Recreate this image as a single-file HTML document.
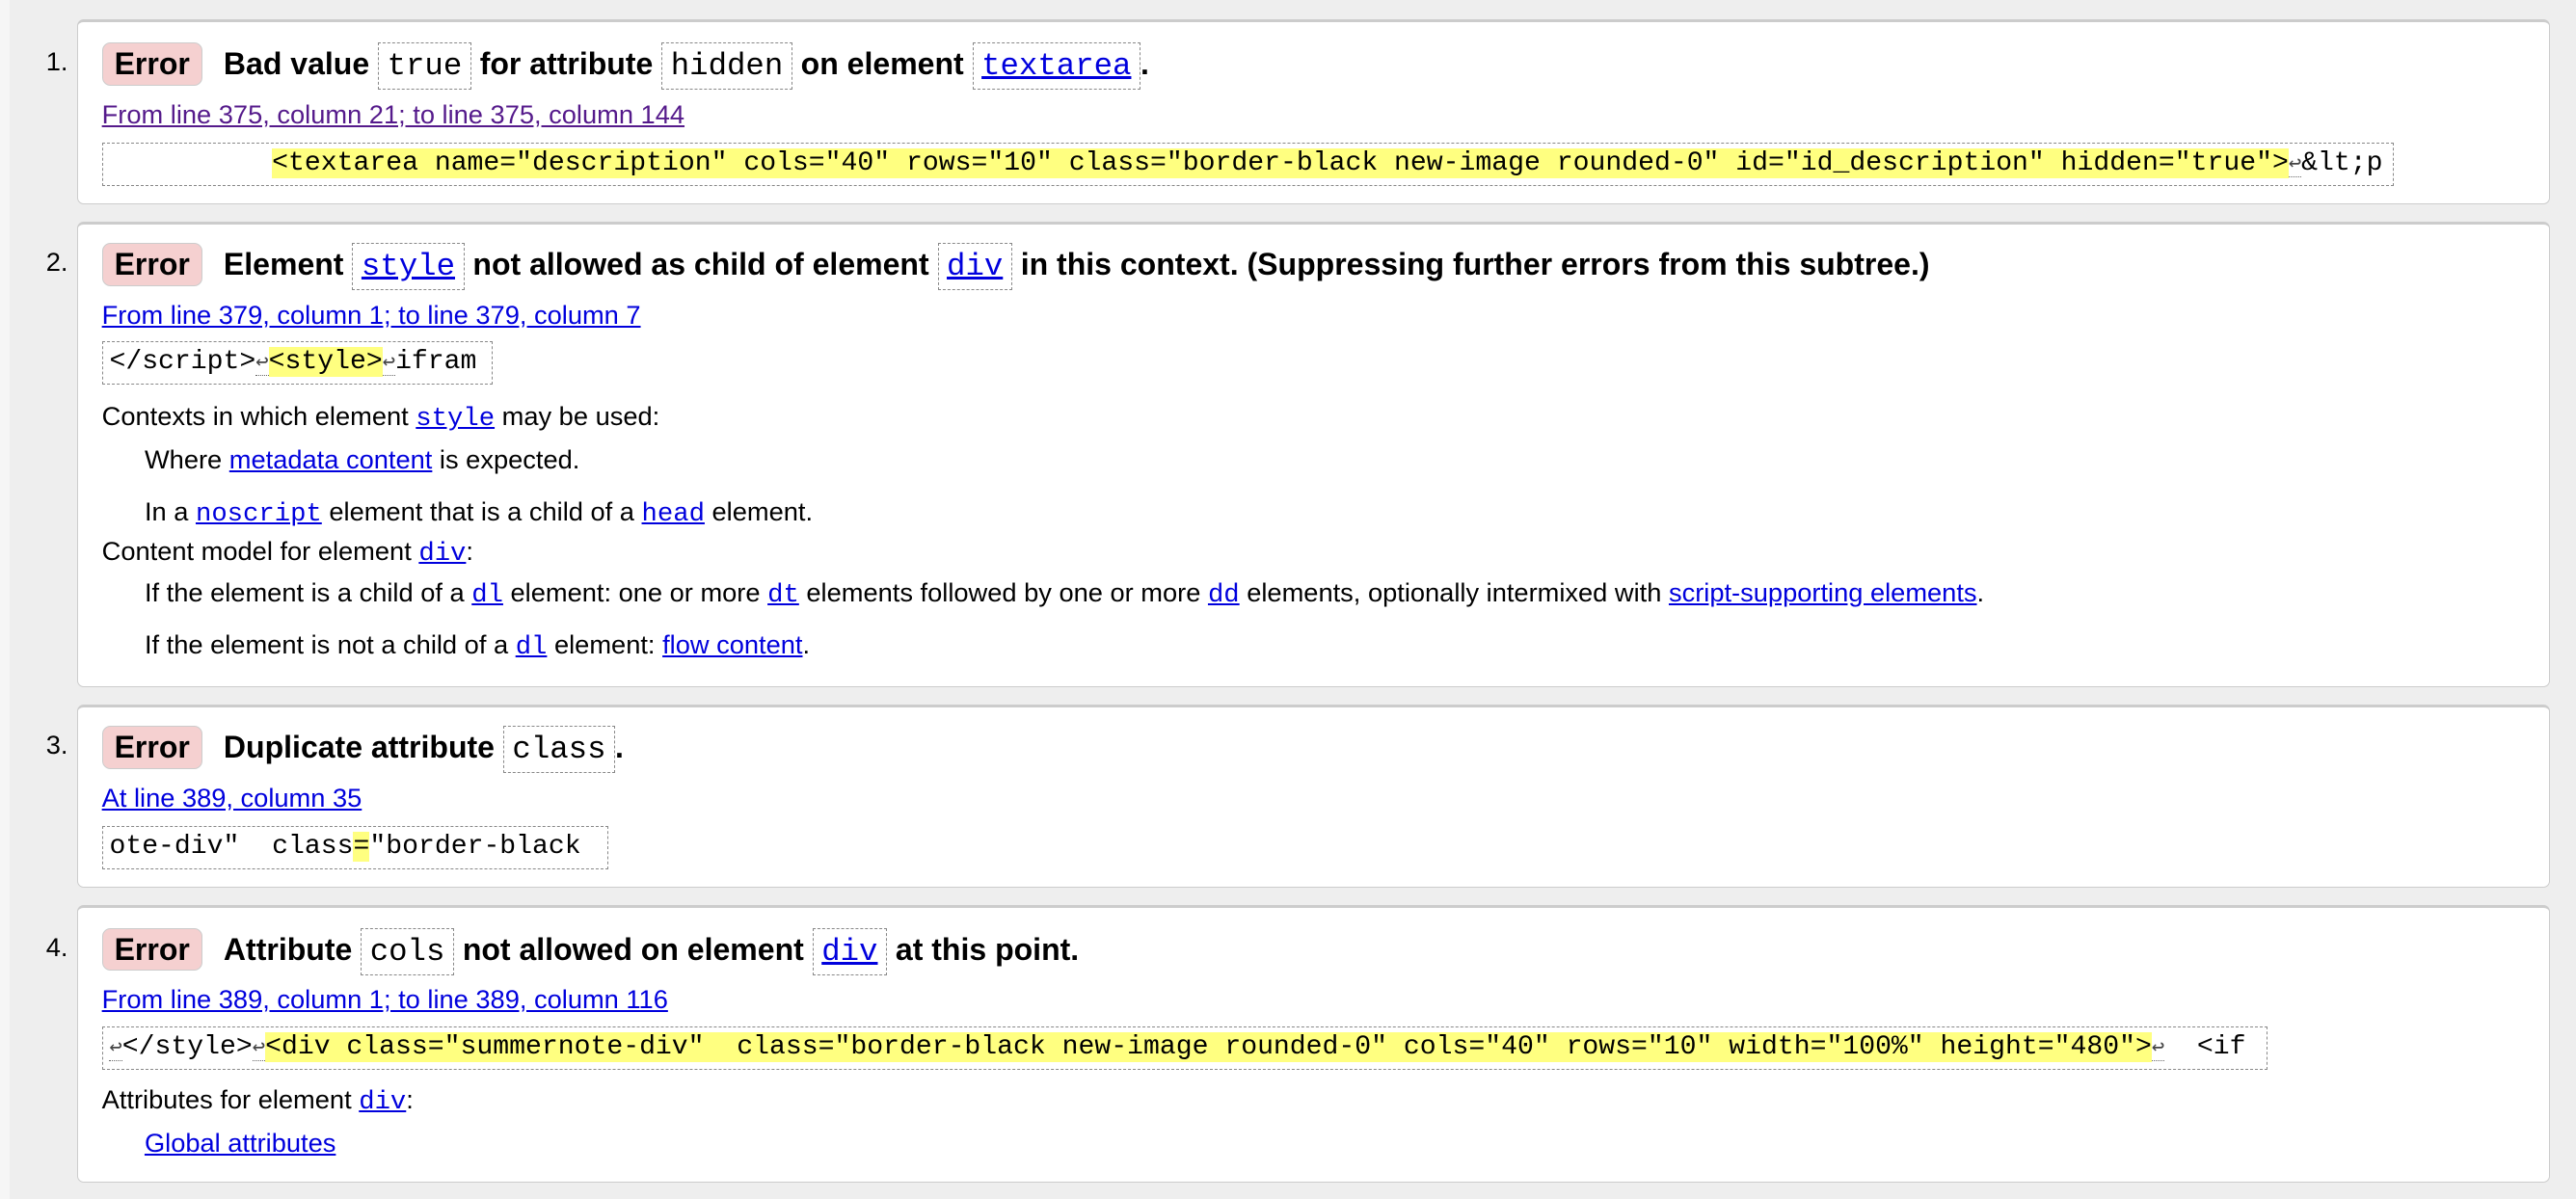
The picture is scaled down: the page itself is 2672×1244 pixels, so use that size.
<!DOCTYPE html>
<html><head><meta charset="utf-8"><style>
html,body{margin:0;padding:0;background:#eeeeee;width:2672px;height:1244px;overflow:hidden}
#w{zoom:1.704;position:relative;width:1568px;height:730px;font-family:"Liberation Sans",Arial,sans-serif;font-size:16px;color:#000}
#strip{position:absolute;left:0;top:0;width:6px;height:730px;background:#f6f6f6}
.card{position:absolute;left:47px;width:1504px;background:#fff;border:1px solid #ccc;border-top:2px solid #ccc;border-radius:4px}
.l{position:absolute;white-space:pre;line-height:24px;height:24px}
.num{position:absolute;left:28px;line-height:24px}
.t{font-weight:bold;font-size:18.8px}
.badge{display:inline-block;background:#f5d0d0;border:1px solid #ccc;border-radius:5px;padding:0 7px;line-height:25px;margin-right:13px}
.ic{font-family:"Liberation Mono",monospace;font-weight:normal;font-size:19px;border:1px dashed #888;padding:3px 5px}
a{color:#0000dd;text-decoration:underline}
a.v{color:#551a8b}
.m{font-family:"Liberation Mono",monospace}
.cb{position:absolute;left:62px;height:25px;border:1px dashed #888;font-family:"Liberation Mono",monospace;font-size:16.5px;line-height:25px;white-space:pre;padding:0 4px;overflow:hidden}
.hl{background:#ffff80}
.r{font-size:13px;color:#444;border-bottom:1px dotted #666}
</style></head><body><div id="w">
<div id="strip"></div>
<div class="card" style="top:12px;height:110px"></div>
<div class="card" style="top:135px;height:281px"></div>
<div class="card" style="top:429px;height:109px"></div>
<div class="card" style="top:551px;height:167px"></div>

<div class="num" style="top:26px">1.</div>
<div class="l t" style="left:62px;top:26px"><span class="badge">Error</span>Bad value <span class="ic">true</span> for attribute <span class="ic">hidden</span> on element <span class="ic"><a href="#">textarea</a></span>.</div>
<div class="l" style="left:62px;top:58px"><a class="v" href="#">From line 375, column 21; to line 375, column 144</a></div>
<div class="cb" style="top:87px;width:1386px">          <span class="hl">&lt;textarea name="description" cols="40" rows="10" class="border-black new-image rounded-0" id="id_description" hidden="true"&gt;</span><span class="r">↩</span>&amp;lt;p</div>

<div class="num" style="top:148px">2.</div>
<div class="l t" style="left:62px;top:148px"><span class="badge">Error</span>Element <span class="ic"><a href="#">style</a></span> not allowed as child of element <span class="ic"><a href="#">div</a></span> in this context. (Suppressing further errors from this subtree.)</div>
<div class="l" style="left:62px;top:180px"><a href="#">From line 379, column 1; to line 379, column 7</a></div>
<div class="cb" style="top:208px;width:229px">&lt;/script&gt;<span class="r">↩</span><span class="hl">&lt;style&gt;</span><span class="r">↩</span>ifram</div>
<div class="l" style="left:62px;top:242px">Contexts in which element <a class="m" href="#">style</a> may be used:</div>
<div class="l" style="left:88px;top:268px">Where <a href="#">metadata content</a> is expected.</div>
<div class="l" style="left:88px;top:300px">In a <a class="m" href="#">noscript</a> element that is a child of a <a class="m" href="#">head</a> element.</div>
<div class="l" style="left:62px;top:324px">Content model for element <a class="m" href="#">div</a>:</div>
<div class="l" style="left:88px;top:349px">If the element is a child of a <a class="m" href="#">dl</a> element: one or more <a class="m" href="#">dt</a> elements followed by one or more <a class="m" href="#">dd</a> elements, optionally intermixed with <a href="#">script-supporting elements</a>.</div>
<div class="l" style="left:88px;top:381px">If the element is not a child of a <a class="m" href="#">dl</a> element: <a href="#">flow content</a>.</div>

<div class="num" style="top:442px">3.</div>
<div class="l t" style="left:62px;top:442px"><span class="badge">Error</span>Duplicate attribute <span class="ic">class</span>.</div>
<div class="l" style="left:62px;top:474px"><a href="#">At line 389, column 35</a></div>
<div class="cb" style="top:503px;width:299px">ote-div"  class<span class="hl">=</span>"border-black </div>

<div class="num" style="top:565px">4.</div>
<div class="l t" style="left:62px;top:565px"><span class="badge">Error</span>Attribute <span class="ic">cols</span> not allowed on element <span class="ic"><a href="#">div</a></span> at this point.</div>
<div class="l" style="left:62px;top:597px"><a href="#">From line 389, column 1; to line 389, column 116</a></div>
<div class="cb" style="top:625px;width:1309px"><span class="r">↩</span>&lt;/style&gt;<span class="r">↩</span><span class="hl">&lt;div class="summernote-div"  class="border-black new-image rounded-0" cols="40" rows="10" width="100%" height="480"&gt;</span><span class="r">↩</span>  &lt;if</div>
<div class="l" style="left:62px;top:658px">Attributes for element <a class="m" href="#">div</a>:</div>
<div class="l" style="left:88px;top:684px"><a href="#">Global attributes</a></div>
</div></body></html>
